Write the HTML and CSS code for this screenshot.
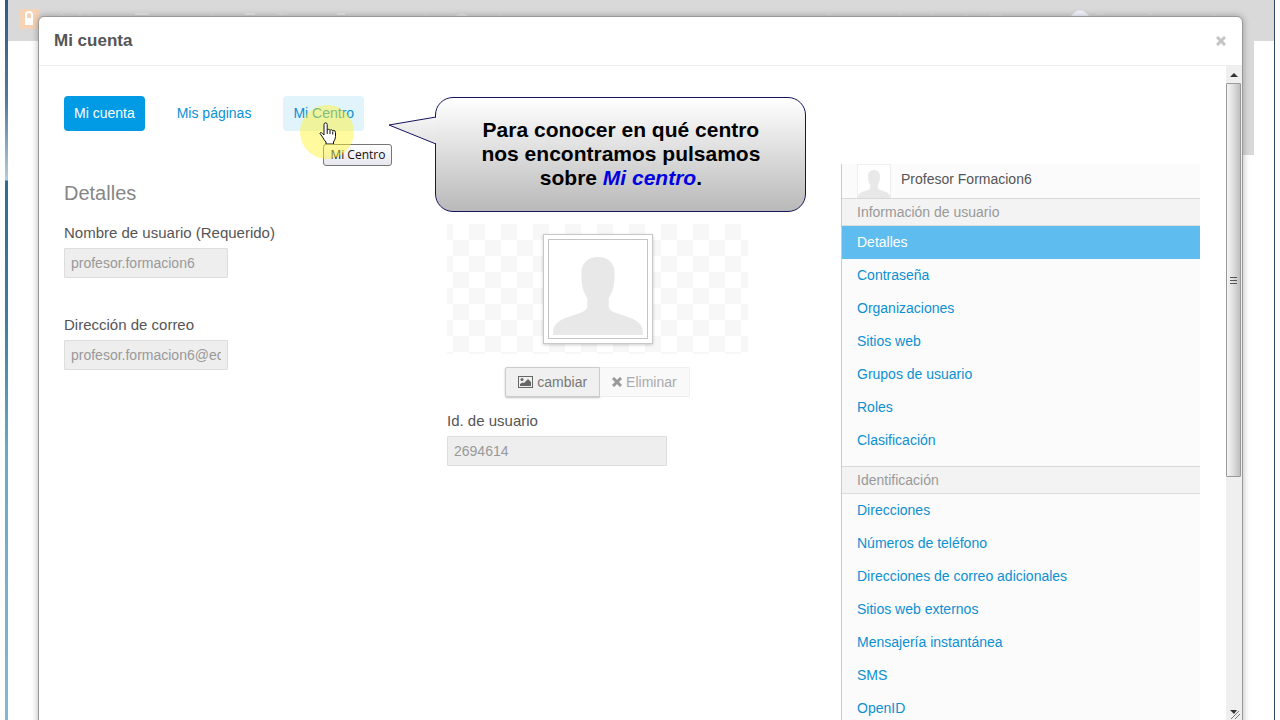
FILE: index.html
```html
<!DOCTYPE html>
<html lang="es">
<head>
    <meta charset="UTF-8">
    <meta name="viewport" content="width=device-width, initial-scale=1.0">
    <title>Mi cuenta</title>
    <link rel="stylesheet" href="styles.css">
</head>
<body>
    <svg class="symbols" aria-hidden="true">
        <symbol id="person" viewBox="0 0 92 80">
            <path d="M46 0C36 0 29 6 29 16c0 12 1 19 6 26v8c0 4-3 6-9 8C10 63 1 66 0 76v4h92v-4c-1-10-10-13-26-18-6-2-9-4-9-8v-8c5-7 6-14 6-26C63 6 56 0 46 0z" fill="#e8e8e8"/>
        </symbol>
    </svg>

    <div class="window">
        <div class="dockbar">
            <svg class="lock" viewBox="0 0 20 20" aria-hidden="true">
                <rect width="20" height="20" rx="2" fill="#f5d3b5"/>
                <path d="M7 9V6a3 3 0 0 1 6 0v3" fill="none" stroke="#fff" stroke-width="2"/>
                <path d="M6 9h8v7H6z" fill="#fff"/>
            </svg>
            <!-- tops of the menu entries that stick out over the dialog -->
            <svg class="dockbar_marks" viewBox="0 0 1266 41" aria-hidden="true">
                <g fill="none" stroke="#e3e3e3">
                    <path d="M51 16l3-3 2 3M72 16v-3M82 16v-3M203 16v-2M268 14h12M273 16v-3M418 16v-2M491 16v-2M819 15l4-1M892 16v-3M924 16v-3M957 16l4-2M982 15h12M1089 14h8M1140 14h5M1204 15h4"/>
                </g>
                <path d="M127 13h14v2h-14zM237 13h10v2h-10zM329 13h8v2h-8zM447 16q7-5 13 0z" fill="#e8e8e8"/>
                <path d="M1063 16q9-11 18 0z" fill="#f6f6ff"/>
            </svg>
        </div>
        <div class="side_block"></div>

        <div class="dialog" role="dialog" aria-labelledby="dialogTitle">
            <div class="dialog_header">
                <h1 id="dialogTitle">Mi cuenta</h1>
                <button class="close" type="button" aria-label="Cerrar">
                    <svg viewBox="0 0 10 10"><path d="M1 1l8 8M9 1L1 9" stroke="#c4c4c4" stroke-width="3"/></svg>
                </button>
            </div>

            <div class="dialog_body">
                <div class="content">
                    <ul class="tabs">
                        <li><a class="active" href="#">Mi cuenta</a></li>
                        <li><a href="#">Mis páginas</a></li>
                        <li>
                            <a class="hover" href="#">Mi Centro</a>
                            <span class="tooltip" role="tooltip">Mi Centro</span>
                            <span class="spot"></span>
                            <svg class="pointer" viewBox="0 0 18 22" aria-hidden="true">
                                <path d="M5 13V2.500a1.600 1.600 0 0 1 3.200 0V8q1.300-1.500 2.900.2 1.500-1.200 2.700.4 2.700-.7 2.700 1.900v4q0 2.500-2 5.500v2H7v-2q-2-2-3.500-5L1 11.500q.5-2.500 4 1.500z" fill="#fff" stroke="#111"/>
                                <path d="M8.200 8v4M11 8.500v3.500M13.700 9.500v3" stroke="#111"/>
                            </svg>
                            <div class="callout">
                                <svg class="callout_tail" viewBox="0 0 49 30" aria-hidden="true">
                                    <defs>
                                        <linearGradient id="tail" x1="0" y1="0" x2="0" y2="1">
                                            <stop offset="0" stop-color="#f4f4f4"/>
                                            <stop offset="1" stop-color="#e3e3e3"/>
                                        </linearGradient>
                                    </defs>
                                    <path d="M49 1L1 9l48 19z" fill="url(#tail)"/>
                                    <path d="M48 1L1 9l47 19" fill="none" stroke="#14145a"/>
                                </svg>
                                <p>Para conocer en qué centro<br>nos encontramos pulsamos<br>sobre <em>Mi centro</em>.</p>
                            </div>
                        </li>
                    </ul>

                    <div class="columns">
                        <form class="details">
                            <div>
                                <h2>Detalles</h2>
                                <div class="field">
                                    <label for="userName">Nombre de usuario (Requerido)</label>
                                    <input id="userName" type="text" value="profesor.formacion6" disabled>
                                </div>
                                <div class="field">
                                    <label for="email">Dirección de correo</label>
                                    <input id="email" type="text" value="profesor.formacion6@educa" disabled>
                                </div>
                            </div>
                            <div class="photo_column">
                                <div class="photo_area">
                                    <div class="photo">
                                        <svg role="img" aria-label="Imagen de usuario"><use href="#person"/></svg>
                                    </div>
                                </div>
                                <div class="photo_buttons">
                                    <button class="change" type="button">
                                        <svg class="icon_picture" viewBox="0 0 15 12" aria-hidden="true">
                                            <rect x=".5" y=".5" width="14" height="11" fill="none" stroke="#666"/>
                                            <circle cx="4" cy="3.500" r="1.500" fill="#666"/>
                                            <path d="M2 10V8l2.500-1.500L6 7l4-4 3 3v4z" fill="#666"/>
                                        </svg>
                                        cambiar
                                    </button>
                                    <button class="remove" type="button" disabled>
                                        <svg class="icon_remove" viewBox="0 0 10 10" aria-hidden="true"><path d="M1 1l8 8M9 1L1 9" stroke="#999" stroke-width="3"/></svg>
                                        Eliminar
                                    </button>
                                </div>
                                <div class="field">
                                    <label for="userId">Id. de usuario</label>
                                    <input id="userId" class="wide" type="text" value="2694614" disabled>
                                </div>
                            </div>
                        </form>

                        <nav class="menu">
                            <div class="user">
                                <span class="avatar"><svg aria-hidden="true"><use href="#person"/></svg></span>
                                Profesor Formacion6
                            </div>
                            <h3>Información de usuario</h3>
                            <ul>
                                <li><a class="selected" href="#">Detalles</a></li>
                                <li><a href="#">Contraseña</a></li>
                                <li><a href="#">Organizaciones</a></li>
                                <li><a href="#">Sitios web</a></li>
                                <li><a href="#">Grupos de usuario</a></li>
                                <li><a href="#">Roles</a></li>
                                <li><a href="#">Clasificación</a></li>
                            </ul>
                            <h3>Identificación</h3>
                            <ul>
                                <li><a href="#">Direcciones</a></li>
                                <li><a href="#">Números de teléfono</a></li>
                                <li><a href="#">Direcciones de correo adicionales</a></li>
                                <li><a href="#">Sitios web externos</a></li>
                                <li><a href="#">Mensajería instantánea</a></li>
                                <li><a href="#">SMS</a></li>
                                <li><a href="#">OpenID</a></li>
                            </ul>
                        </nav>
                    </div>
                </div>

                <div class="scrollbar" aria-hidden="true">
                    <svg class="arrow" viewBox="0 0 15 17"><path d="M4 11l4-4 4 4z" fill="#333"/></svg>
                    <div class="thumb"><i></i><i></i><i></i></div>
                    <svg class="arrow" viewBox="0 0 15 17"><path d="M4 7h7l-3 4z" fill="#333"/><path d="M5 16l8-8M9 16l5-5" stroke="#777"/></svg>
                </div>
            </div>
        </div>
    </div>
</body>
</html>
```
FILE: styles.css
```css
* {
    box-sizing: border-box;
}

body {
    margin: 0;
    height: 100vh;
    overflow: hidden;
    padding: 0 5px;
    background-color: #fdfdfd;
    font-family: "Liberation Sans", Arial, sans-serif;
    font-size: 14px;
    line-height: 20px;
    color: #555;
}

ul {
    list-style: none;
    margin: 0;
    padding: 0;
}

a {
    color: #0b90d2;
    text-decoration: none;
}

.symbols {
    display: none;
}

/* browser window behind the dialog */
.window {
    position: relative;
    height: 100%;
    padding-left: 3px;
    border-right: 1px solid #2c4a63;
    background: linear-gradient(#2c5a86 0, #56789a 100px, #b5cbd8 180px, #2f6b93 181px, #3f7d9f 320px, #6aa9bf 450px, #7fb9cd 100%) 0 0 / 3px 100% no-repeat #fff;
}

.dockbar {
    height: 41px;
    padding: 9px 11px;
    background-color: #d9d9d9;
    position: relative;
}

.lock {
    display: block;
    width: 20px;
    height: 20px;
}

.dockbar_marks {
    position: absolute;
    top: 0;
    left: 0;
    width: 100%;
    height: 41px;
}

.side_block {
    width: 60px;
    height: 114px;
    margin-left: auto;
    margin-right: 20px;
    background-color: #d9d9d9;
}

.dialog {
    position: absolute;
    top: 16px;
    left: 33px;
    right: 31px;
    bottom: -8px;
    display: flex;
    flex-direction: column;
    background-color: #fff;
    border: 1px solid #999;
    border-radius: 6px;
    box-shadow: 0 0 7px rgba(0, 0, 0, .3);
}

.dialog_header {
    display: flex;
    justify-content: space-between;
    align-items: center;
    height: 49px;
    padding: 0 16px 0 15px;
    border-bottom: 1px solid #eee;
}

h1 {
    margin: 0;
    font-size: 17px;
    color: #555;
}

.close {
    padding: 0;
    border: 0;
    background: none;
    height: 16px;
}

.close svg {
    display: block;
    width: 10px;
    height: 10px;
}

.dialog_body {
    flex: 1;
    min-height: 0;
    display: flex;
    padding-bottom: 7px;
}

.content {
    flex: 1;
    min-width: 0;
    height: 100%;
    overflow: hidden;
    padding: 30px 26px 0 25px;
}

.tabs {
    display: flex;
    gap: 22px;
}

.tabs li {
    position: relative;
}

.tabs a {
    display: block;
    padding: 7px 10px 8px;
    border-radius: 4px;
}

.tabs .active {
    background-color: #009ae5;
    color: #fff;
}

.tabs .hover {
    background-color: #e2f4fb;
}

.pointer {
    position: absolute;
    top: 26px;
    left: 36px;
    width: 18px;
    height: 22px;
}

.tooltip {
    position: absolute;
    top: 48px;
    left: 40px;
    padding: 0 6px;
    border: 1px solid #767676;
    border-radius: 3px;
    background: linear-gradient(#fff, #e6e6ee);
    color: #111;
    font-family: "Open Sans", "Noto Sans", sans-serif;
    font-size: 12px;
    white-space: nowrap;
}

.spot {
    position: absolute;
    top: 9px;
    left: 17px;
    width: 54px;
    height: 54px;
    border-radius: 50%;
    background-color: rgba(255, 244, 40, .45);
}

.callout {
    position: absolute;
    z-index: 2;
    top: 1px;
    left: 152px;
    width: 371px;
    height: 115px;
    padding: 20px 0 0;
    border: 1px solid #14145a;
    border-radius: 18px;
    background: linear-gradient(#fff, #b9b9b9);
}

.callout_tail {
    position: absolute;
    top: 18px;
    left: -48px;
    width: 49px;
    height: 30px;
}

.callout p {
    margin: 0;
    text-align: center;
    font-size: 21px;
    font-weight: bold;
    line-height: 24px;
    color: #000;
}

.callout em {
    color: #0000e0;
}

.columns {
    display: grid;
    grid-template-columns: minmax(0, 1fr) 359px;
    gap: 93px;
    margin-top: 33px;
}

.details {
    display: grid;
    grid-template-columns: 1fr 1fr;
    gap: 82px;
}

h2 {
    margin: 19px 0 20px;
    font-size: 20px;
    font-weight: normal;
    color: #868686;
}

.field {
    margin-bottom: 37px;
}

label {
    display: block;
    margin-bottom: 5px;
    font-size: 15px;
}

input {
    display: block;
    width: 164px;
    height: 30px;
    padding: 4px 6px;
    border: 1px solid #ddd;
    border-radius: 1px;
    background-color: #eee;
    color: #999;
    font: inherit;
}

.wide {
    width: 220px;
}

.photo_column {
    padding-top: 60px;
}

.photo_area {
    height: 130px;
    display: flex;
    justify-content: center;
    align-items: center;
    background: repeating-conic-gradient(#f7f7f7 0 25%, #fff 0 50%) 6px 0 / 32px 32px;
}

.photo {
    width: 110px;
    height: 110px;
    padding: 4px;
    border: 1px solid #c8c8c8;
    background-color: #fff;
    box-shadow: 0 1px 3px rgba(0, 0, 0, .2);
}

.photo svg {
    display: block;
    width: 100px;
    height: 100px;
    padding: 17px 3px 3px;
    border: 1px solid #c4c4c4;
}

.photo_buttons {
    display: flex;
    justify-content: center;
    margin: 13px 0 14px;
}

.photo_buttons button {
    display: flex;
    align-items: center;
    gap: 4px;
    height: 30px;
    padding: 0 12px;
    border: 1px solid #ccc;
    background-color: #f0f0f0;
    color: #777;
    font: inherit;
}

.photo_buttons .change {
    border-radius: 2px 0 0 2px;
    box-shadow: 0 1px 2px rgba(0, 0, 0, .25);
}

.photo_buttons .remove {
    border-color: #eee;
    border-left: 0;
    border-radius: 0 2px 2px 0;
    background-color: #f9f9f9;
    color: #aaa;
}

.icon_picture {
    width: 15px;
    height: 12px;
}

.icon_remove {
    width: 10px;
    height: 10px;
}

.menu {
    border-left: 1px solid #ccc;
    background-color: #fbfbfb;
}

.user {
    display: flex;
    gap: 10px;
    height: 34px;
    padding-left: 15px;
    line-height: 31px;
}

.avatar {
    width: 34px;
    height: 34px;
    border: 1px solid #eee;
    background-color: #fff;
}

.avatar svg {
    display: block;
    width: 32px;
    height: 33px;
    padding-top: 5px;
}

h3 {
    margin: 0;
    padding: 3px 15px;
    border-top: 1px solid #d8d8d8;
    border-bottom: 1px solid #ddd;
    background-color: #f3f3f3;
    font-size: 14px;
    font-weight: normal;
    color: #999;
}

.menu ul {
    padding-bottom: 9px;
}

.menu a {
    display: block;
    height: 33px;
    padding: 6px 15px;
}

.menu .selected {
    background-color: #5fbcee;
    color: #fff;
}

.scrollbar {
    display: flex;
    flex-direction: column;
    width: 16px;
    background-color: #efefef;
    padding-right: 1px;
}

.arrow {
    flex: none;
    width: 15px;
    height: 17px;
}

.thumb {
    height: 394px;
    margin-bottom: auto;
    display: flex;
    flex-direction: column;
    justify-content: center;
    align-items: center;
    gap: 2px;
    border: 1px solid #999;
    border-radius: 1px;
    background: linear-gradient(90deg, #f5f5f5, #e0e0e0 45%, #bebebe);
}

.thumb i {
    width: 7px;
    height: 1px;
    background-color: #555;
}
```
